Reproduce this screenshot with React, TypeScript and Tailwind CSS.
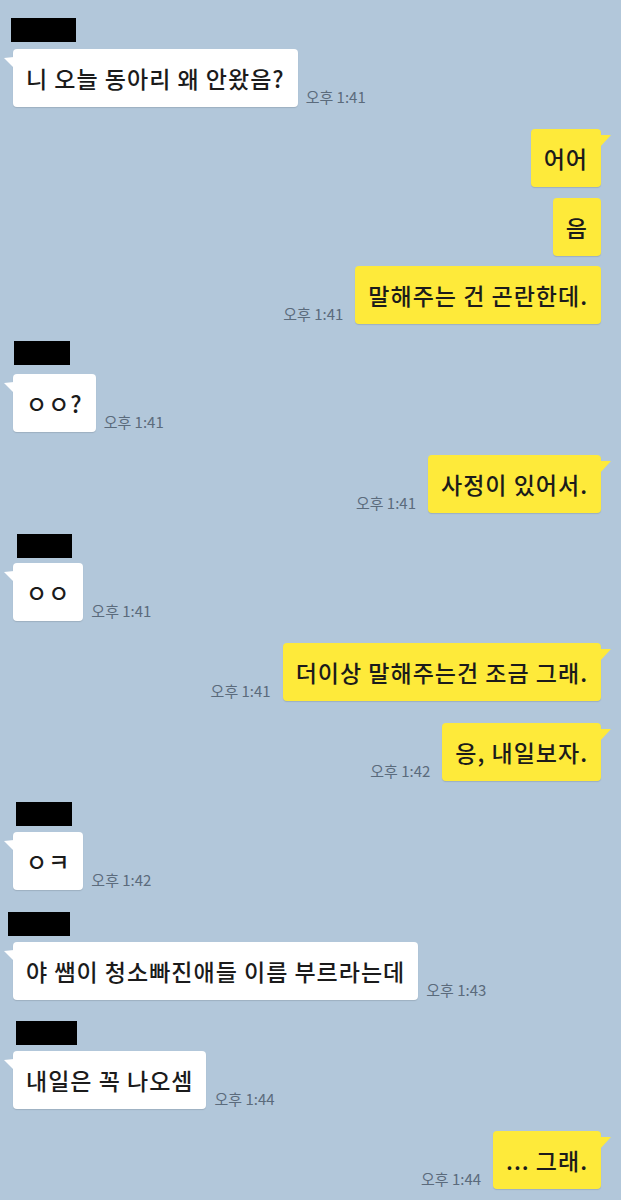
import React from "react";

type Msg =
  | { kind: "name"; mt: string; w: string; ml: string }
  | { kind: "in" | "out"; mt: string; text: string; time?: string; tail?: boolean };

const FONT = { fontFamily: '"Noto Sans CJK KR", "Noto Sans", sans-serif' };

const messages: Msg[] = [
  { kind: "name", mt: "mt-[18px]", w: "w-[65px]", ml: "ml-[11px]" },
  { kind: "in", mt: "mt-[7px]", text: "니 오늘 동아리 왜 안왔음?", time: "오후 1:41", tail: true },
  { kind: "out", mt: "mt-[22px]", text: "어어", tail: true },
  { kind: "out", mt: "mt-[11px]", text: "음" },
  { kind: "out", mt: "mt-[10px]", text: "말해주는 건 곤란한데.", time: "오후 1:41" },
  { kind: "name", mt: "mt-[17px]", w: "w-[56px]", ml: "ml-[14px]" },
  { kind: "in", mt: "mt-[9px]", text: "ㅇㅇ?", time: "오후 1:41", tail: true },
  { kind: "out", mt: "mt-[23px]", text: "사정이 있어서.", time: "오후 1:41", tail: true },
  { kind: "name", mt: "mt-[21px]", w: "w-[55px]", ml: "ml-[17px]" },
  { kind: "in", mt: "mt-[5px]", text: "ㅇㅇ", time: "오후 1:41", tail: true },
  { kind: "out", mt: "mt-[22px]", text: "더이상 말해주는건 조금 그래.", time: "오후 1:41", tail: true },
  { kind: "out", mt: "mt-[22px]", text: "응, 내일보자.", time: "오후 1:42", tail: true },
  { kind: "name", mt: "mt-[21px]", w: "w-[56px]", ml: "ml-[16px]" },
  { kind: "in", mt: "mt-[6px]", text: "ㅇㅋ", time: "오후 1:42", tail: true },
  { kind: "name", mt: "mt-[22px]", w: "w-[62px]", ml: "ml-[8px]" },
  { kind: "in", mt: "mt-[6px]", text: "야 쌤이 청소빠진애들 이름 부르라는데", time: "오후 1:43", tail: true },
  { kind: "name", mt: "mt-[21px]", w: "w-[61px]", ml: "ml-[16px]" },
  { kind: "in", mt: "mt-[6px]", text: "내일은 꼭 나오셈", time: "오후 1:44", tail: true },
  { kind: "out", mt: "mt-[22px]", text: "... 그래.", time: "오후 1:44", tail: true },
];

function Tail({ side, color }: { side: "left" | "right"; color: string }) {
  if (side === "left") {
    return (
      <svg className="absolute left-[-9px] top-[8px]" width="10" height="11" viewBox="0 0 10 11">
        <polygon points="0,1 10,0 10,11" fill={color} />
      </svg>
    );
  }
  return (
    <svg className="absolute right-[-10px] top-[6px]" width="11" height="12" viewBox="0 0 11 12">
      <polygon points="0,0 11,0 0,12" fill={color} />
    </svg>
  );
}

function Time({ t }: { t: string }) {
  return (
    <span className="text-[15px] leading-[18px] text-[#5b6b7c] whitespace-nowrap mb-[1px]">{t}</span>
  );
}

function Row({ m }: { m: Exclude<Msg, { kind: "name" }> }) {
  const isIn = m.kind === "in";
  const bg = isIn ? "#ffffff" : "#feea3a";
  return (
    <div className={`${m.mt} flex items-end ${isIn ? "justify-start pl-[13px] gap-[8px]" : "justify-end pr-[20px] gap-[12px]"}`}>
      {!isIn && m.time && <Time t={m.time} />}
      <div
        className={`relative h-[58px] flex items-center px-[13px] rounded-[4px] text-[23px] tracking-[1px] font-medium text-[#1b1b1b] whitespace-nowrap shadow-[0_1px_1px_rgba(0,0,0,0.12)] ${
          isIn ? "bg-white" : "bg-[#feea3a]"
        }`}
      >
        {m.tail && <Tail side={isIn ? "left" : "right"} color={bg} />}
        {m.text}
      </div>
      {isIn && m.time && <Time t={m.time} />}
    </div>
  );
}

export default function App() {
  return (
    <div className="w-[621px] h-[1200px] overflow-hidden bg-[#b2c7da] flex flex-col" style={FONT}>
      {messages.map((m, i) =>
        m.kind === "name" ? (
          <div key={i} className={`${m.mt} ${m.ml} ${m.w} h-[24px] bg-black shrink-0`} />
        ) : (
          <Row key={i} m={m} />
        )
      )}
    </div>
  );
}
